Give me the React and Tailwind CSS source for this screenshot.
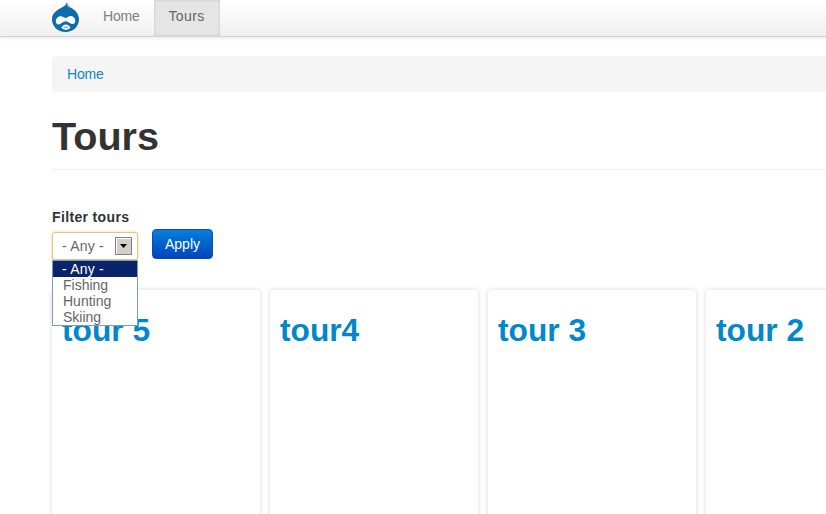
const font = { fontFamily: '"Liberation Sans", Arial, sans-serif' };

function DrupalLogo() {
  return (
    <svg width="27" height="30" viewBox="0 0 27 30" className="block">
      <path d="M15 0c.4 3 2.500 4.700 5.300 6.500C24 8.900 27 12.500 27 17.200 27 24.500 21 30 13.500 30S0 24.500 0 17.200C0 11.500 4.500 8.500 8.500 6.300 11.500 4.700 14.300 3 15 0z" fill="#0d6cab" />
      <path d="M15 0c.4 3 2.500 4.700 5.300 6.500-1.300-.4-2.900-1-4.200-1.800-1-.7-1.300-3-1.100-4.700z" fill="#9ccbe6" />
      <path d="M3.800 19.500c0-3.300 2.800-5.700 5.600-5.200 1.900.3 3 1.700 4.300 1.700 1.500 0 2.900-1.900 5-1.900 2.700 0 4.600 2.400 4.600 5 0 1.900-1.200 3-2.700 3-2.100 0-4.200-2.900-6.900-2.900s-4.800 3.200-7 3.200c-1.700 0-2.900-1.100-2.900-2.900z" fill="#fff" />
      <path d="M9.300 25.800c.8-2 2.600-3.400 4.600-3.400s3.700 1.300 4.500 3.300c-1.400 1.400-2.900 2-4.600 2-1.600 0-3.200-.6-4.500-1.900z" fill="#fff" />
      <path d="M10.800 25.200c1-.5 2-.7 3.100-.7s2.100.2 3 .7c-1 .4-2 .6-3 .6s-2.100-.2-3.100-.6z" fill="#5f9fca" />
    </svg>
  );
}

function Card({ title }) {
  return (
    <div className="w-[208px] h-[260px] shrink-0 bg-white rounded-[3px] shadow-[0_0_5px_rgba(0,0,0,0.16)] px-[10px] pt-[22px]">
      <h2 className="text-[31.7px] leading-[36px] font-bold text-[#0088cc]">{title}</h2>
    </div>
  );
}

export default function App() {
  return (
    <div style={font} className="relative w-[826px] h-[514px] overflow-hidden bg-white text-[#333]">
      <div className="flex h-[37px] pl-[52px] bg-gradient-to-b from-white to-[#f0f0f0] border-b border-[#d4d4d4] shadow-[0_1px_4px_rgba(0,0,0,0.1)]">
        <div className="pt-[2px] w-[36px]">
          <DrupalLogo />
        </div>
        <a className="pl-[15px] pr-[14px] pt-[7px] text-[14px] leading-[18px] tracking-[-0.2px] font-light text-[#808080]">Home</a>
        <a className="w-[66px] text-center pt-[7px] text-[14px] leading-[18px] tracking-[0.4px] text-[#666] bg-[#e5e5e5] shadow-[inset_0_0_3px_rgba(0,0,0,0.15)]">Tours</a>
      </div>

      <div className="pl-[52px]">
        <div className="mt-[19px] h-[36px] w-[800px] bg-[#f5f5f5] rounded-l-[4px] pl-[15px] pt-[9px] text-[14px] leading-[18px] tracking-[-0.2px] text-[#0f86c0]">
          Home
        </div>

        <h1 className="mt-[22px] text-[39.6px] leading-[44px] font-bold text-[#333]">Tours</h1>
        <div className="mt-[11px] border-b border-[#eee]" />

        <label className="block mt-[39px] text-[14px] leading-[16px] tracking-[0.35px] font-bold text-[#333]">Filter tours</label>

        <div className="flex items-start gap-[14px] -mt-px">
          <div className="mt-[8px] w-[86px] h-[28px] flex items-center justify-between bg-white border border-[#e0c48c] rounded-[3px] shadow-[0_0_3px_rgba(230,190,110,0.7)] pl-[9px] pr-[5px] text-[14px] tracking-[0.2px] text-[#666]">
            <span>- Any -</span>
            <span className="flex items-center justify-center w-[17px] h-[18px] bg-[#d4d0c8] border border-[#808080] shadow-[inset_1px_1px_0_#fff]">
              <svg width="7" height="4" viewBox="0 0 7 4"><path d="M0 0h7L3.500 4z" fill="#000" /></svg>
            </span>
          </div>
          <button className="mt-[5px] w-[61px] h-[30px] rounded-[4px] bg-gradient-to-b from-[#0a7fdc] to-[#0044bb] border border-[#0a4fa8] text-[14px] text-white">
            Apply
          </button>
        </div>

        <div className="flex gap-[10px] mt-[30px]">
          <Card title="tour 5" />
          <Card title="tour4" />
          <Card title="tour 3" />
          <Card title="tour 2" />
        </div>
      </div>

      {/* open select list sits over the first card */}
      <ul className="absolute left-[52px] top-[260px] w-[86px] h-[66px] bg-white border border-[#7f9db9] text-[14px] leading-[16px] text-[#666]">
        <li className="bg-[#0a246a] text-white pl-[9px] tracking-[0.2px]">- Any -</li>
        <li className="pl-[10px]">Fishing</li>
        <li className="pl-[10px]">Hunting</li>
        <li className="pl-[10px]">Skiing</li>
      </ul>
    </div>
  );
}
